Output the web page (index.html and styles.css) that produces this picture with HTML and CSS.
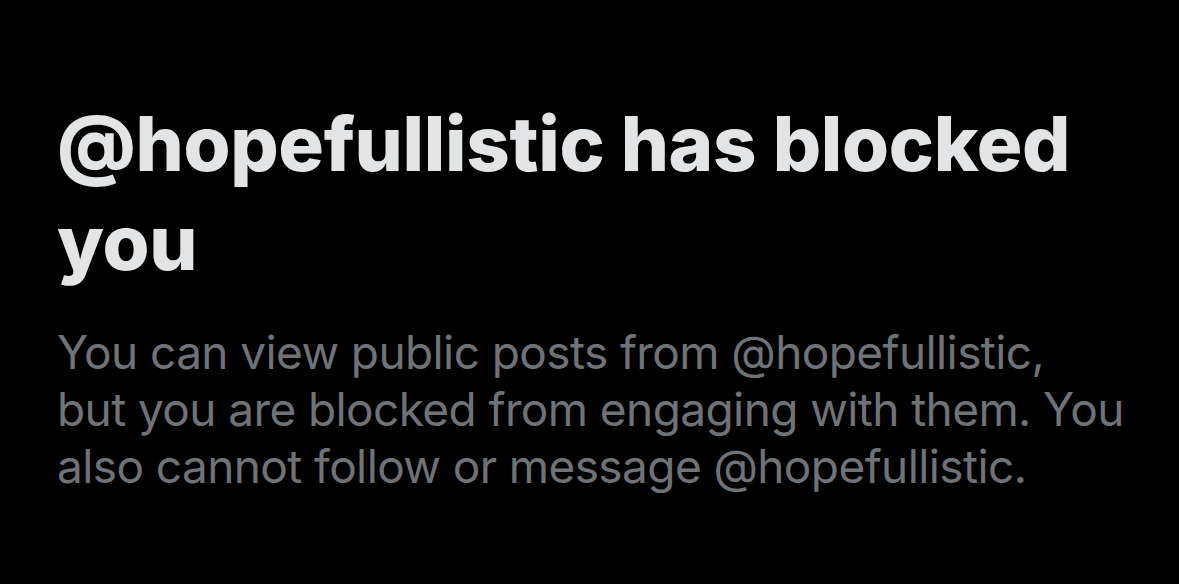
FILE: index.html
```html
<!DOCTYPE html>
<html lang="en">
<head>
<meta charset="utf-8">
<title>Blocked</title>
<link rel="stylesheet" href="styles.css">
</head>
<body>
<main class="notice">
  <h1 class="notice-title">@hopefullistic has blocked you</h1>
  <p class="notice-text">You can view public posts from @hopefullistic, but you are blocked from engaging with them. You also cannot follow or message @hopefullistic.</p>
</main>
</body>
</html>
```

FILE: styles.css
```css
html, body {
  margin: 0;
  padding: 0;
  background: #000;
  height: 100%;
}
body {
  font-family: Inter, "Liberation Sans", Arial, sans-serif;
}
.notice {
  display: flex;
  flex-direction: column;
  gap: 32px;
  padding: 94px 0 0 57px;
  width: 1067px;
}
.notice-title {
  margin: 0;
  font-size: 76px;
  line-height: 99px;
  font-weight: 800;
  letter-spacing: -0.3px;
  color: #e3e4e5;
}
.notice-text {
  margin: 0;
  font-size: 46px;
  line-height: 57px;
  font-weight: 400;
  letter-spacing: -0.6px;
  color: #6f7276;
}
```
